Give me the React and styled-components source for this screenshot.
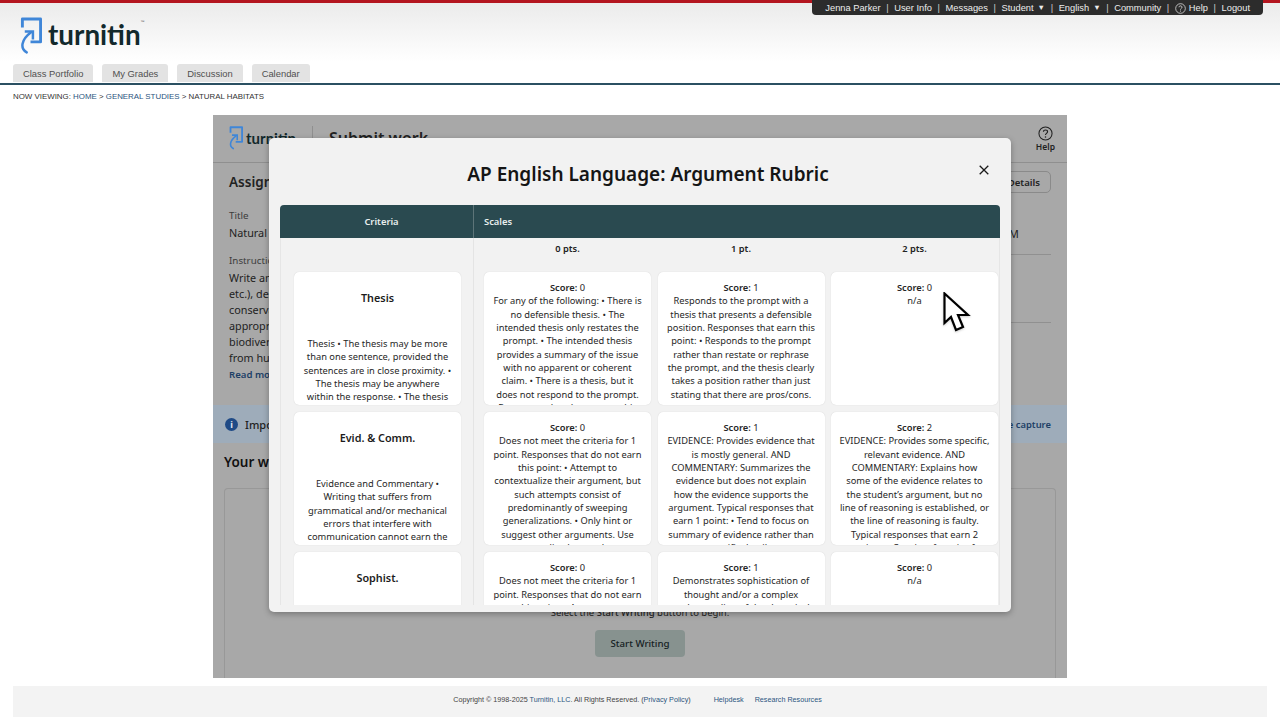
import React from 'react'
import styled, { createGlobalStyle } from 'styled-components'

const utilityLinks = ['Jenna Parker', 'User Info', 'Messages', 'Student ▾', 'English ▾', 'Community', 'Help', 'Logout']
const tabs = ['Class Portfolio', 'My Grades', 'Discussion', 'Calendar']

const rubric = [
  {
    name: 'Thesis',
    about: 'Thesis • The thesis may be more than one sentence, provided the sentences are in close proximity. • The thesis may be anywhere within the response. • The thesis must be a claim.',
    scales: [
      { score: 0, text: 'For any of the following: • There is no defensible thesis. • The intended thesis only restates the prompt. • The intended thesis provides a summary of the issue with no apparent or coherent claim. • There is a thesis, but it does not respond to the prompt. Responses that do not earn this' },
      { score: 1, text: 'Responds to the prompt with a thesis that presents a defensible position. Responses that earn this point: • Responds to the prompt rather than restate or rephrase the prompt, and the thesis clearly takes a position rather than just stating that there are pros/cons.' },
      { score: 0, text: 'n/a' },
    ],
  },
  {
    name: 'Evid. & Comm.',
    about: 'Evidence and Commentary • Writing that suffers from grammatical and/or mechanical errors that interfere with communication cannot earn the point.',
    scales: [
      { score: 0, text: 'Does not meet the criteria for 1 point. Responses that do not earn this point: • Attempt to contextualize their argument, but such attempts consist of predominantly of sweeping generalizations. • Only hint or suggest other arguments. Use generalized examples.' },
      { score: 1, text: 'EVIDENCE: Provides evidence that is mostly general. AND COMMENTARY: Summarizes the evidence but does not explain how the evidence supports the argument. Typical responses that earn 1 point: • Tend to focus on summary of evidence rather than specific details.' },
      { score: 2, text: 'EVIDENCE: Provides some specific, relevant evidence. AND COMMENTARY: Explains how some of the evidence relates to the student’s argument, but no line of reasoning is established, or the line of reasoning is faulty. Typical responses that earn 2 points: • Consist of a pair of' },
    ],
  },
  {
    name: 'Sophist.',
    about: 'Sophistication of thought.',
    scales: [
      { score: 0, text: 'Does not meet the criteria for 1 point. Responses that do not earn this point: • Attempt to' },
      { score: 1, text: 'Demonstrates sophistication of thought and/or a complex understanding of the rhetorical' },
      { score: 0, text: 'n/a' },
    ],
  },
]

const TurnitinMark = ({ size }) => (
  <svg width={size} height={size * 1.7} viewBox="0 0 23 39" fill="none" aria-hidden="true">
    <path d="M2.5 11V2h19v24H11" stroke="#3f86d8" strokeWidth="3" strokeLinejoin="round" />
    <path d="M7 37C0 33 1 24 11.5 16" stroke="#3f86d8" strokeWidth="2.6" strokeLinecap="round" />
    <path d="M5 15h8.5v8.5" stroke="#3f86d8" strokeWidth="2.6" />
  </svg>
)

const HelpIcon = ({ size, color }) => (
  <svg width={size} height={size} viewBox="0 0 16 16" fill="none" aria-hidden="true">
    <circle cx="8" cy="8" r="7" stroke={color} strokeWidth="1.1" />
    <path d="M5.8 6.2C5.8 5 6.8 4.2 8 4.2s2.2.8 2.2 2c0 1.7-2.2 1.7-2.2 3.4" stroke={color} strokeWidth="1.2" />
    <circle cx="8" cy="11.6" r=".8" fill={color} />
  </svg>
)

const App = () => (
  <Page>
    <GlobalStyle />
    <Header>
      <UtilityNav>
        {utilityLinks.map((link, index) => (
          <React.Fragment key={link}>
            {index > 0 && <Pipe>|</Pipe>}
            <UtilityLink>
              {link === 'Help' && <HelpIcon size={11} color="#e6e6e6" />}
              {link.replace(' ▾', '')}
              {link.endsWith('▾') && <Caret>▼</Caret>}
            </UtilityLink>
          </React.Fragment>
        ))}
      </UtilityNav>
      <Logo>
        <TurnitinMark size={22} />
        <LogoWord>turnitin<sup>™</sup></LogoWord>
      </Logo>
      <Tabs>
        {tabs.map(tab => <Tab key={tab}>{tab}</Tab>)}
      </Tabs>
    </Header>

    <Breadcrumb>
      NOW VIEWING: <a>HOME</a> &gt; <a>GENERAL STUDIES</a> &gt; NATURAL HABITATS
    </Breadcrumb>

    <Frame>
      <FrameHeader>
        <TurnitinMark size={14} />
        <FrameLogoWord>turnitin</FrameLogoWord>
        <FrameTitle>Submit work</FrameTitle>
        <HelpLink>
          <HelpIcon size={15} color="#1f1f1f" />
          Help
        </HelpLink>
      </FrameHeader>

      <Assignment>
        <AssignmentMain>
          <SectionTitle>Assignment details</SectionTitle>
          <Label>Title</Label>
          <Value>Natural Habitats</Value>
          <Label>Instructions</Label>
          <Instructions>
            Write an essay on a natural habitat (forest, wetlands,<br />
            etc.), describing its plant and animal life and its<br />
            conservation status, and use<br />
            appropriate evidence about its<br />
            biodiversity and the threats it faces<br />
            from human activity.
          </Instructions>
          <ReadMore>Read more</ReadMore>
        </AssignmentMain>
        <AssignmentSide>
          <DetailsButton>View Details</DetailsButton>
          <SideLabel>Due date</SideLabel>
          <SideValue>11:59 PM</SideValue>
          <SideRule />
          <SideRule />
        </AssignmentSide>
      </Assignment>

      <Banner>
        <InfoDot>i</InfoDot>
        <span>Important: your work is saved automatically</span>
        <BannerLink>Secure capture</BannerLink>
      </Banner>

      <WorkTitle>Your work</WorkTitle>
      <WorkBox>
        <WorkHint>Select the <b>Start Writing</b> button to begin.</WorkHint>
        <StartButton>Start Writing</StartButton>
      </WorkBox>
    </Frame>

    <Footer>
      <span>Copyright © 1998-2025 <a>Turnitin, LLC</a>. All Rights Reserved. (<a>Privacy Policy</a>)</span>
      <FooterLink>Helpdesk</FooterLink>
      <FooterLink>Research Resources</FooterLink>
    </Footer>

    <Modal>
      <ModalTop>
        <ModalTitle>AP English Language: Argument Rubric</ModalTitle>
        <CloseButton aria-label="Close">
          <svg width="10" height="10" viewBox="0 0 10 10" aria-hidden="true">
            <path d="M.7.7l8.6 8.6M9.3.7L.7 9.3" stroke="#1a1a1a" strokeWidth="1.3" />
          </svg>
        </CloseButton>
      </ModalTop>

      <Table>
        <TableHead>
          <CriteriaHead>Criteria</CriteriaHead>
          <ScalesHead>Scales</ScalesHead>
        </TableHead>
        <TableBody>
          <PointsRow>
            <CriteriaCell />
            <PointsCells>
              <Points>0 pts.</Points>
              <Points>1 pt.</Points>
              <Points>2 pts.</Points>
            </PointsCells>
          </PointsRow>
          {rubric.map(row => (
            <Row key={row.name}>
              <CriteriaCell>
                <CriterionCard>
                  <CriterionName>{row.name}</CriterionName>
                  <div>{row.about}</div>
                </CriterionCard>
              </CriteriaCell>
              <ScaleCells>
                {row.scales.map((scale, index) => (
                  <ScaleCard key={index}>
                    <b>Score:</b> {scale.score}
                    <br />
                    {scale.text}
                  </ScaleCard>
                ))}
              </ScaleCells>
            </Row>
          ))}
        </TableBody>
      </Table>
    </Modal>

    <Pointer width="28" height="41" viewBox="0 0 28 41" aria-hidden="true">
      <path d="M1.5 1.5V31l6.5-6 5 13 7-3-5-12H25z" fill="#fff" stroke="#000" strokeWidth="2.2" strokeLinejoin="miter" />
    </Pointer>
  </Page>
)

export default App

const GlobalStyle = createGlobalStyle`
  html, body {
    margin: 0;
    background: #fff;
  }
  body {
    font-family: "Noto Sans", "Open Sans", sans-serif;
    overflow: hidden;
  }
  * {
    box-sizing: border-box;
  }
`

const Page = styled.div`
  position: relative;
  width: 1280px;
  height: 720px;
  overflow: hidden;
  display: flex;
  flex-direction: column;
`

const Header = styled.header`
  height: 85px;
  display: flex;
  flex-direction: column;
  border-bottom: 2px solid #2b5062;
  background: linear-gradient(#b3151f 0 3px, #ebebeb 3px, #fff 62px);
`

const UtilityNav = styled.nav`
  align-self: flex-end;
  margin-right: 17px;
  height: 15px;
  padding: 1px 13px 0;
  display: flex;
  align-items: center;
  background: #2c2c2c;
  border-radius: 0 0 4px 4px;
  font-family: "Liberation Sans", Arial, sans-serif;
  font-size: 9.3px;
  color: #ededed;
`

const Pipe = styled.span`
  margin: 0 5.6px;
  color: #cfcfcf;
`

const UtilityLink = styled.a`
  display: flex;
  align-items: center;
  gap: 3px;
  white-space: nowrap;
`

const Caret = styled.span`
  font-size: 7.5px;
  margin-left: 1px;
  position: relative;
  top: -1px;
`

const Logo = styled.div`
  display: flex;
  align-items: flex-start;
  gap: 6px;
  margin: 2px 0 0 20px;
  height: 47px;
`

const LogoWord = styled.div`
  font-family: Lato, "Noto Sans", sans-serif;
  font-size: 27.8px;
  font-weight: 700;
  line-height: 36px;
  color: #12292c;
  sup {
    font-size: 5px;
    vertical-align: 21px;
    line-height: 0;
    font-weight: 400;
    color: #666;
  }
`

const Tabs = styled.div`
  display: flex;
  gap: 9px;
  padding-left: 13px;
`

const Tab = styled.a`
  height: 18px;
  padding: 0 10px;
  display: flex;
  align-items: center;
  background: #e3e3e3;
  border-radius: 3px 3px 0 0;
  font-family: "Liberation Sans", Arial, sans-serif;
  font-size: 9.4px;
  color: #505050;
`

const Breadcrumb = styled.div`
  height: 30px;
  padding: 7px 0 0 13px;
  font-family: "Liberation Sans", Arial, sans-serif;
  font-size: 7.9px;
  line-height: 10px;
  color: #333;
  a {
    color: #2b5580;
  }
`

const Frame = styled.main`
  width: 854px;
  height: 563px;
  margin-left: 213px;
  background: #a8a8a8;
  color: #222;
  display: flex;
  flex-direction: column;
  overflow: hidden;
`

const FrameHeader = styled.div`
  height: 48px;
  padding: 11px 12px 0 16px;
  display: flex;
  align-items: flex-start;
  gap: 3px;
  border-bottom: 1px solid #8f8f8f;
`

const FrameLogoWord = styled.span`
  font-family: Lato, sans-serif;
  font-size: 15px;
  font-weight: 700;
  line-height: 24px;
  padding-right: 16px;
  border-right: 1px solid #8f8f8f;
  color: #12292c;
`

const FrameTitle = styled.span`
  margin-left: 13px;
  font-size: 16px;
  font-weight: 600;
  line-height: 24px;
  flex: 1;
`

const HelpLink = styled.a`
  display: flex;
  flex-direction: column;
  align-items: center;
  font-size: 8.5px;
  font-weight: 600;
  line-height: 11px;
`

const Assignment = styled.section`
  height: 242px;
  display: flex;
  justify-content: space-between;
  padding: 9px 16px 0;
`

const AssignmentMain = styled.div`
  width: 340px;
`

const SectionTitle = styled.h2`
  margin: 0 0 17px;
  font-size: 13.5px;
  font-weight: 600;
  line-height: 20px;
`

const Label = styled.div`
  font-size: 9.8px;
  line-height: 14px;
  color: #3c3c3c;
`

const Value = styled.div`
  font-size: 10.8px;
  line-height: 18px;
  margin: 1px 0 12px;
`

const Instructions = styled.div`
  margin-top: 2px;
  font-size: 10.8px;
  line-height: 16px;
  white-space: nowrap;
`

const ReadMore = styled.a`
  display: block;
  margin-top: 2px;
  font-size: 9.6px;
  font-weight: 600;
  color: #1d3f66;
`

const AssignmentSide = styled.div`
  width: 82px;
  margin-top: -1px;
  display: flex;
  flex-direction: column;
  align-items: flex-end;
`

const DetailsButton = styled.button`
  height: 22px;
  padding: 0 10px;
  background: transparent;
  border: 1px solid #8a8a8a;
  border-radius: 5px;
  font: 600 9.6px "Noto Sans", sans-serif;
  color: #222;
  white-space: nowrap;
`

const SideLabel = styled.div`
  align-self: stretch;
  margin-top: 16px;
  font-size: 9.8px;
  line-height: 14px;
`

const SideValue = styled.div`
  align-self: stretch;
  padding-left: 3px;
  font-size: 10.8px;
  line-height: 18px;
  margin-top: 2px;
`

const SideRule = styled.div`
  align-self: stretch;
  height: 1px;
  margin: 11px 0 56px;
  background: #909090;
`

const Banner = styled.div`
  height: 38px;
  flex: none;
  padding: 0 16px 0 12px;
  display: flex;
  align-items: center;
  gap: 7px;
  background: #9eacba;
  font-size: 11px;
  font-weight: 500;
`

const InfoDot = styled.span`
  width: 13px;
  height: 13px;
  border-radius: 50%;
  background: #1f4a86;
  color: #dfe6ee;
  font-size: 9px;
  font-weight: 700;
  line-height: 13px;
  text-align: center;
`

const BannerLink = styled.a`
  margin-left: auto;
  font-size: 9.4px;
  font-weight: 600;
  color: #1d3f66;
`

const WorkTitle = styled.h3`
  margin: 9px 0 16px 11px;
  font-size: 13.5px;
  font-weight: 600;
  line-height: 20px;
  color: #111;
`

const WorkBox = styled.div`
  flex: 1;
  margin: 0 11px;
  border: 1px solid #989898;
  border-bottom: 0;
  border-radius: 4px 4px 0 0;
  padding-top: 117px;
  display: flex;
  flex-direction: column;
  align-items: center;
`

const WorkHint = styled.div`
  font-size: 9.5px;
  line-height: 14px;
  b {
    font-weight: 500;
  }
`

const StartButton = styled.button`
  margin-top: 10px;
  width: 90px;
  height: 27px;
  background: #87928f;
  border: 0;
  border-radius: 4px;
  font: 500 9.7px "Noto Sans", sans-serif;
  color: #14201f;
`

const Footer = styled.footer`
  width: 1254px;
  height: 31px;
  margin: 8px 0 0 13px;
  padding: 0 5px 5px 0;
  display: flex;
  align-items: center;
  justify-content: center;
  background: #f3f3f3;
  font-family: "Liberation Sans", Arial, sans-serif;
  font-size: 7.2px;
  color: #444;
  a {
    color: #2b5580;
  }
`

const FooterLink = styled.a`
  margin-left: 11px;
  &:first-of-type {
    margin-left: 23px;
  }
`

const Modal = styled.div`
  position: absolute;
  left: 269px;
  top: 138px;
  width: 742px;
  height: 474px;
  padding: 0 11px 7px;
  display: flex;
  flex-direction: column;
  background: #f2f2f2;
  border-radius: 5px;
  box-shadow: 0 2px 6px rgba(0, 0, 0, 0.3);
`

const ModalTop = styled.div`
  height: 67px;
  position: relative;
  display: flex;
  align-items: flex-start;
  justify-content: center;
  padding: 22px 0 0 16px;
`

const ModalTitle = styled.h1`
  margin: 0;
  font-size: 19px;
  font-weight: 600;
  line-height: 28px;
  color: #151515;
`

const CloseButton = styled.button`
  position: absolute;
  top: 27px;
  right: 11px;
  width: 10px;
  height: 10px;
  padding: 0;
  border: 0;
  background: none;
  display: flex;
`

const Table = styled.div`
  flex: 1;
  min-height: 0;
  display: flex;
  flex-direction: column;
  overflow: hidden;
`

const TableHead = styled.div`
  height: 33px;
  flex: none;
  display: grid;
  grid-template-columns: 194px 1fr;
  align-items: center;
  background: #2a4a50;
  border-radius: 4px 4px 0 0;
  color: #e8eeee;
  font-size: 9.4px;
  font-weight: 600;
`

const CriteriaHead = styled.div`
  height: 100%;
  padding: 0 0 1px 10px;
  display: flex;
  align-items: center;
  justify-content: center;
  border-right: 1px solid #5d7478;
`

const ScalesHead = styled.div`
  padding: 0 0 1px 10px;
`

const TableBody = styled.div`
  flex: 1;
  min-height: 0;
  overflow: hidden;
  border-left: 1px solid #e6e6e6;
  border-right: 1px solid #e6e6e6;
`

const Row = styled.div`
  display: grid;
  grid-template-columns: 193px 1fr;
  height: 140px;
`

const PointsRow = styled(Row)`
  height: 34px;
`

const CriteriaCell = styled.div`
  padding: 0 12px 0 13px;
  border-right: 1px solid #e4e4e4;
`

const PointsCells = styled.div`
  display: grid;
  grid-template-columns: repeat(3, 167px);
  column-gap: 6.5px;
  padding-left: 10px;
`

const ScaleCells = styled(PointsCells)``

const Points = styled.div`
  padding-top: 3.5px;
  text-align: center;
  font-size: 9.3px;
  font-weight: 600;
  line-height: 13px;
  color: #222;
`

const Card = styled.div`
  height: 133px;
  overflow: hidden;
  background: #fff;
  border-radius: 5px;
  box-shadow: 0 0 1px rgba(0, 0, 0, 0.18);
  text-align: center;
  font-size: 9.3px;
  line-height: 13.35px;
  color: #262626;
`

const CriterionCard = styled(Card)`
  padding: 17px 8.5px 0;
`

const CriterionName = styled.div`
  height: 48px;
  font-size: 10.8px;
  font-weight: 600;
  line-height: 17px;
  color: #1c1c1c;
`

const ScaleCard = styled(Card)`
  padding: 9px 8.5px 0;
  b {
    font-weight: 600;
  }
`

const Pointer = styled.svg`
  position: absolute;
  left: 943px;
  top: 292px;
  filter: drop-shadow(0 1px 1px rgba(0, 0, 0, 0.2));
`
